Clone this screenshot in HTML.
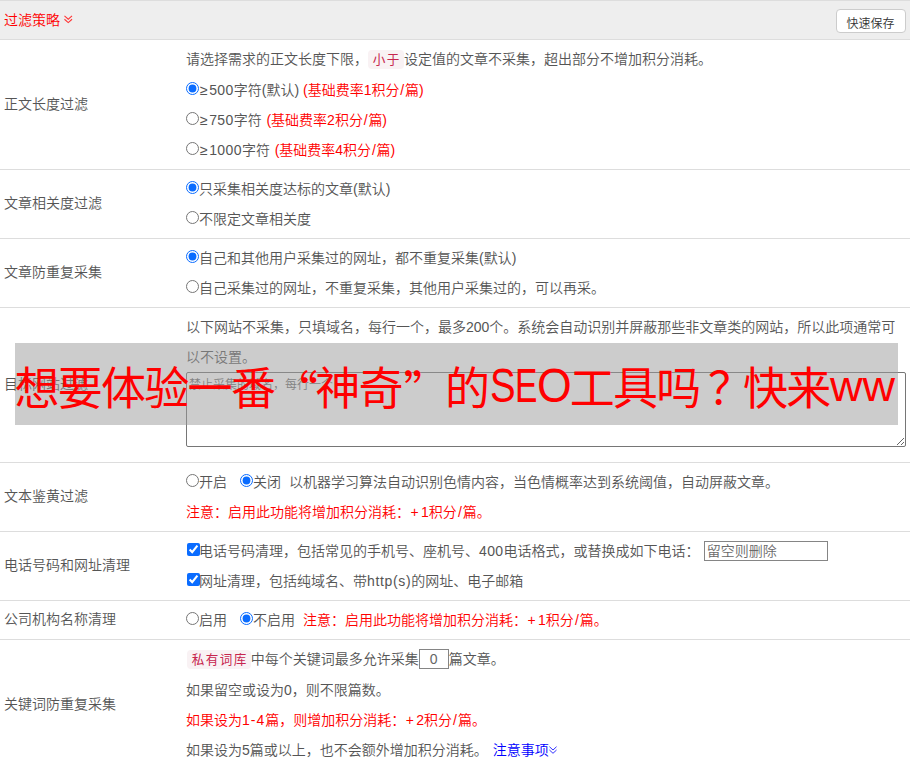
<!DOCTYPE html>
<html lang="zh-CN">
<head>
<meta charset="utf-8">
<title>过滤策略</title>
<style>
html,body{margin:0;padding:0;background:#fff;}
body{width:912px;height:768px;overflow:hidden;position:relative;font-family:"Liberation Sans","Noto Sans CJK SC",sans-serif;font-size:14px;line-height:30px;color:#555;font-weight:350;}
table{border-collapse:separate;border-spacing:0;width:910px;table-layout:fixed;}
td{padding:4px;border-bottom:1px solid #ddd;vertical-align:middle;}
td.l{color:#555;padding:3px 4px 5px 4px;}
tr.hd td{padding:4px;background:#eee;border-top:1px solid #ddd;color:#f00;}
.red{color:#f00;}
.ln{height:30px;white-space:nowrap;}
.ln.tall{height:31px;}
input[type=radio],input[type=checkbox]{margin:0;width:13px;height:13px;vertical-align:0px;accent-color:#0a6cff;}
input[type=checkbox]{margin-left:1px;margin-right:-1px;}
.badge{background:#f9f2f4;color:#c7254e;border-radius:4px;padding:3px 3.1px 2px 5.2px;margin-left:.5px;font-size:12.6px;letter-spacing:1.4px;font-weight:400;}
.ge{margin:0 1.5px 0 1px;}
.pl{margin:0 2.3px 0 .5px;}
.sl2{margin:0 1.1px;}
.sl{margin:0 .8px;}
.w{letter-spacing:1px;}
.d{letter-spacing:.4px;}
.h{letter-spacing:.65px;}
i.s{display:inline-block;height:1px;}
svg.chev{display:inline-block;width:9px;height:9px;overflow:visible;}
.btn{position:absolute;left:836px;top:9px;width:70px;height:24px;box-sizing:border-box;border:1px solid #ccc;border-radius:4px;background:#fff;color:#333;font-size:12px;line-height:16px;text-align:center;font-family:inherit;font-weight:inherit;padding:5px 1px 0 0;}
textarea{display:block;box-sizing:border-box;width:720px;height:75px;margin:0 0 11px 0;border:1px solid #767676;border-radius:2px;padding:3px 2px 2px 2px;font-family:inherit;font-weight:inherit;font-size:12px;line-height:18px;resize:both;background:#fff;color:#333;}
textarea::placeholder,input::placeholder{color:#6a6a6a;}
.tin{box-sizing:border-box;border:1px solid #858585;height:20px;font-family:inherit;font-weight:inherit;font-size:14px;line-height:16px;padding:1px 2px;vertical-align:0px;color:#666;margin:0;}
.overlay{position:absolute;left:15px;top:343px;width:883px;height:82px;background:rgba(153,153,153,0.5);color:#f00;font-size:45px;line-height:81px;letter-spacing:-1.7px;white-space:nowrap;overflow:hidden;z-index:10;font-weight:400;}
.sg{position:absolute;top:6px;height:81px;white-space:nowrap;}
.sg.q{font-family:"Noto Sans CJK SC",sans-serif;}
.sg.lt{font-size:48px;letter-spacing:0;transform-origin:0 50%;top:1.5px;}
a{color:#00f;text-decoration:none;}
</style>
</head>
<body>
<table>
<colgroup><col style="width:182px"><col style="width:728px"></colgroup>
<tr class="hd"><td colspan="2"><div class="ln">过滤策略<i class="s" style="width:4px"></i><svg class="chev" viewBox="0 0 9 9" style="width:8.5px;height:8.5px;vertical-align:1.5px"><path d="M0.5 1 L4.5 4.5 L8.5 1 M0.5 4.5 L4.5 8 L8.5 4.5" fill="none" stroke="#f33" stroke-width="1.1"/></svg></div></td></tr>
<tr><td class="l">正文长度过滤</td><td>
<div class="ln tall">请选择需求的正文长度下限，<span class="badge" style="margin-left:-.4px">小于</span>设定值的文章不采集，超出部分不增加积分消耗。</div>
<div class="ln"><input type="radio" name="a" checked><span class="ge">≥</span><span class="d">500</span>字符(默认) <span class="red">(基础费率1积分<span class="sl">/</span>篇)</span></div>
<div class="ln"><input type="radio" name="a"><span class="ge">≥</span><span class="d">750</span>字符<i class="s" style="width:.8px"></i> <span class="red">(基础费率2积分<span class="sl">/</span>篇)</span></div>
<div class="ln"><input type="radio" name="a"><span class="ge">≥</span><span class="d">1000</span>字符<i class="s" style="width:.8px"></i> <span class="red">(基础费率4积分<span class="sl">/</span>篇)</span></div>
</td></tr>
<tr><td class="l">文章相关度过滤</td><td>
<div class="ln"><input type="radio" name="b" checked>只采集相关度达标的文章(默认)</div>
<div class="ln"><input type="radio" name="b">不限定文章相关度</div>
</td></tr>
<tr><td class="l">文章防重复采集</td><td>
<div class="ln"><input type="radio" name="c" checked>自己和其他用户采集过的网址，都不重复采集(默认)</div>
<div class="ln"><input type="radio" name="c">自己采集过的网址，不重复采集，其他用户采集过的，可以再采。</div>
</td></tr>
<tr><td class="l">目标网站过滤</td><td>
<div style="white-space:normal;width:716px">以下网站不采集，只填域名，每行一个，最多200个。系统会自动识别并屏蔽那些非文章类的网站，所以此项通常可以不设置。</div>
<textarea placeholder="禁止采集的域名，每行一个"></textarea>
</td></tr>
<tr><td class="l">文本鉴黄过滤</td><td>
<div class="ln"><input type="radio" name="d">开启<i class="s" style="width:13px"></i><input type="radio" name="d" checked>关闭<i class="s" style="width:8px"></i>以机器学习算法自动识别色情内容，当色情概率达到系统阈值，自动屏蔽文章。</div>
<div class="ln red">注意：启用此功能将增加积分消耗：<span class="pl">+</span>1积分<span class="sl2">/</span>篇。</div>
</td></tr>
<tr><td class="l">电话号码和网址清理</td><td>
<div class="ln"><input type="checkbox" checked>电话号码清理，包括常见的手机号、座机号、<span class="d">400</span>电话格式，或替换成如下电话：<i class="s" style="width:.3px"></i> <input class="tin" type="text" placeholder="留空则删除" style="width:124px"></div>
<div class="ln"><input type="checkbox" checked>网址清理，包括纯域名、带<span class="h">http(s)</span>的网址、电子邮箱</div>
</td></tr>
<tr><td class="l">公司机构名称清理</td><td>
<div class="ln"><input type="radio" name="e">启用<i class="s" style="width:13px"></i><input type="radio" name="e" checked>不启用<i class="s" style="width:8px"></i><span class="red">注意：启用此功能将增加积分消耗：<span class="pl">+</span>1积分<span class="sl2">/</span>篇。</span></div>
</td></tr>
<tr><td class="l">关键词防重复采集</td><td>
<div class="ln tall"><span class="badge">私有词库</span>中每个关键词最多允许采集<input class="tin" type="text" value="0" style="width:30px;text-align:center">篇文章。</div>
<div class="ln">如果留空或设为0，则不限篇数。</div>
<div class="ln red">如果设为<span class="w">1-4</span>篇，则增加积分消耗：<span class="pl">+</span>2积分<span class="sl2">/</span>篇。</div>
<div class="ln">如果设为5篇或以上，也不会额外增加积分消耗。<i class="s" style="width:1px"></i> <a>注意事项<svg class="chev" viewBox="0 0 9 9" style="width:8px;height:8px;vertical-align:1px;margin-left:.5px"><path d="M0.5 0.8 L4.5 4.5 L8.5 0.8 M0.5 4.5 L4.5 8.2 L8.5 4.5" fill="none" stroke="#22f" stroke-width="1.05"/></svg></a></div>
</td></tr>
</table>
<button class="btn">快速保存</button>
<div class="overlay"><span class="sg" style="left:-0.6px">想要体验一番</span><span class="sg q" style="left:258px">“</span><span class="sg" style="left:300.3px">神奇</span><span class="sg q" style="left:388.5px">”</span><span class="sg" style="left:430px">的</span><span class="sg lt" style="left:474.5px;transform:scaleX(.8)">S</span><span class="sg lt" style="left:499.7px;transform:scaleX(.7)">E</span><span class="sg lt" style="left:522px;transform:scaleX(.93)">O</span><span class="sg" style="left:554.7px">工具吗<span style="position:relative;left:8.5px">？</span>快来</span><span class="sg lt" style="left:814.8px;font-size:42.5px;top:3.2px;transform:scaleX(1.06)">ww</span></div>
</body>
</html>
